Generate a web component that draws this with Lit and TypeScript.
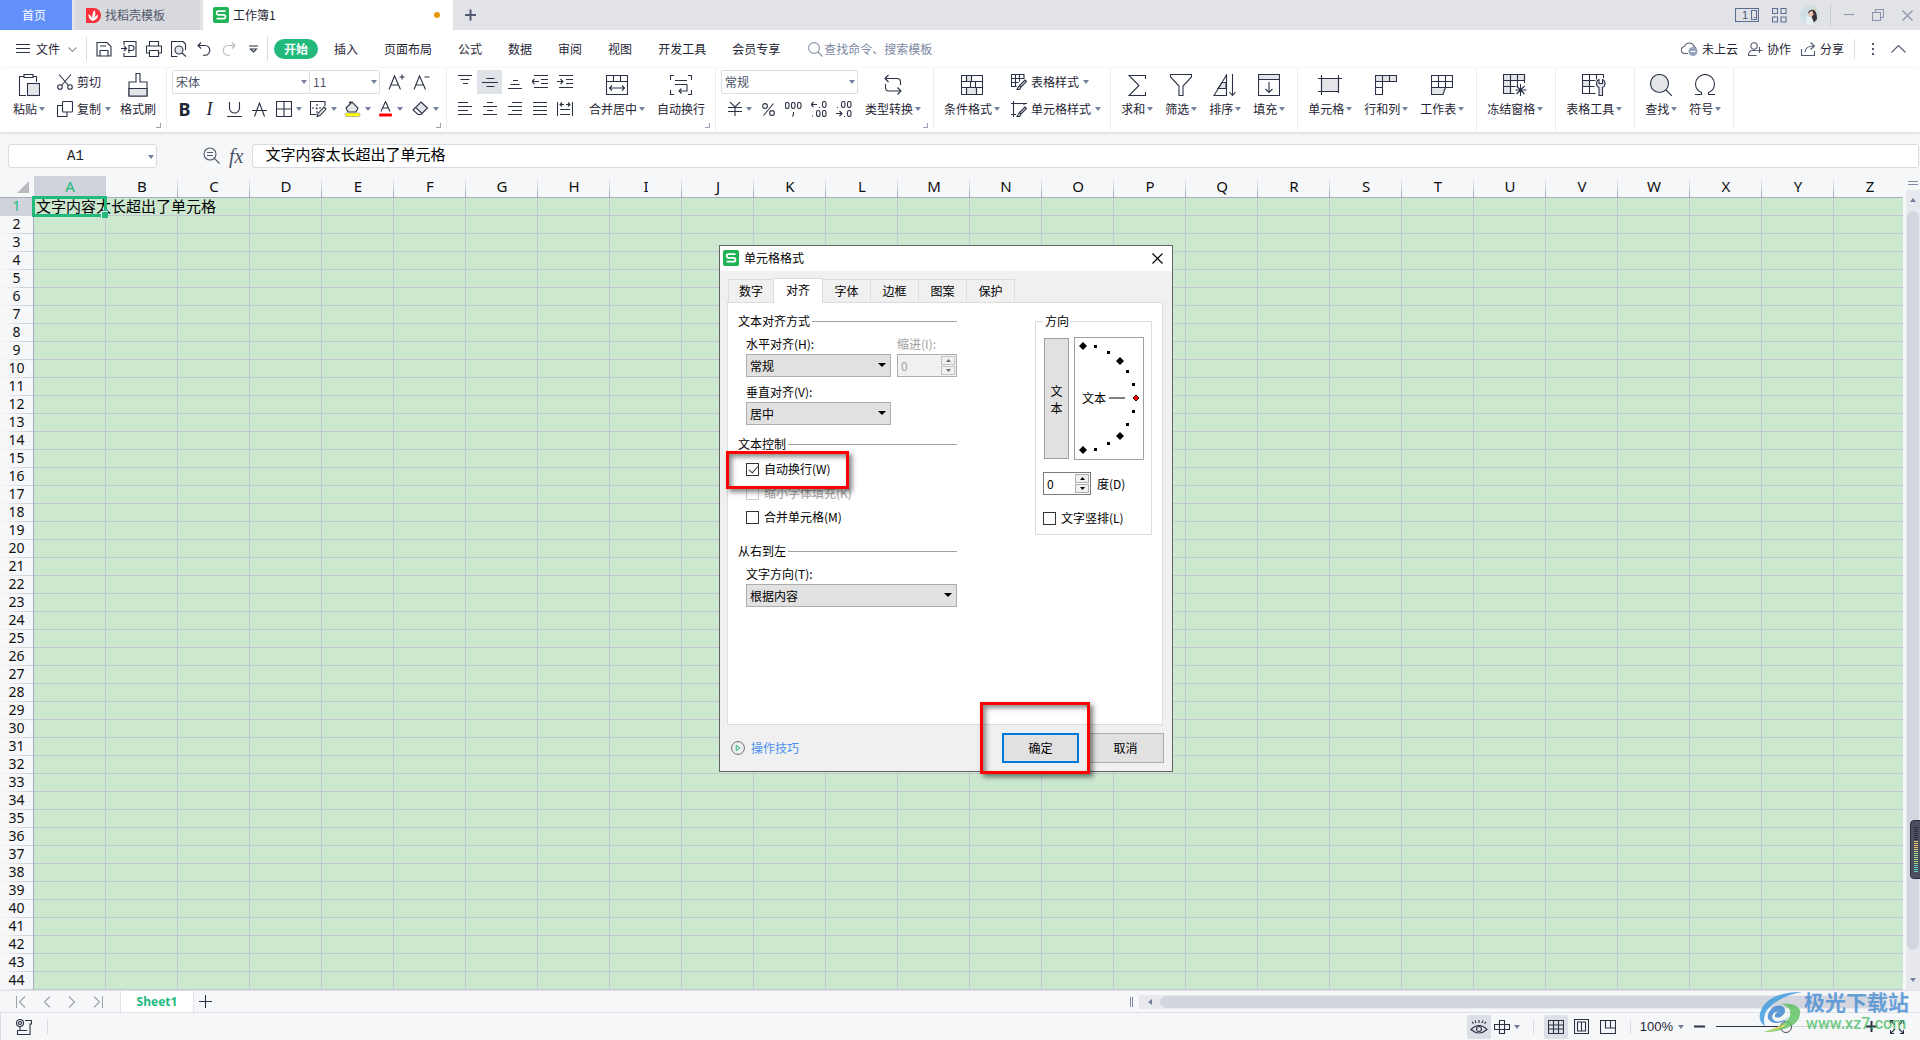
import { LitElement, html, svg, css, TemplateResult, SVGTemplateResult } from "lit";
import { customElement, state } from "lit/decorators.js";

const icon = (w: number, h: number, body: SVGTemplateResult) =>
  html`<svg class="ic" width=${w} height=${h} viewBox="0 0 ${w} ${h}" aria-hidden="true">${body}</svg>`;

const caret = html`<svg class="caret" width="6" height="4" viewBox="0 0 6 4" aria-hidden="true"><path d="M0 0h6L3 4z" /></svg>`;

const logo = html`<svg width="16" height="16" viewBox="0 0 16 16" aria-hidden="true">
  <rect width="16" height="16" rx="2" fill="#1fb355" />
  <path d="M12.5 4.2H5.2Q3.7 4.2 3.7 6T5.2 7.9h5.6q1.6 0 1.6 1.9t-1.6 1.9H3.6" fill="none" stroke="#fff" stroke-width="1.8" />
</svg>`;

const ICONS: Record<string, TemplateResult> = {
  menu: icon(14, 10, svg`<path d="M0 .5h14M0 4.5h14M0 8.5h14" />`),
  chevron: icon(9, 5, svg`<path class="soft" d="M.5 .5l4 4 4-4" />`),
  save: icon(16, 16, svg`<path d="M1 1.5h10l4 4V15H1zM4 15V9.5h8V15M4 5h6" />`),
  exportPdf: icon(16, 16, svg`<path d="M3 4V.5h12v15H3V12M0 7.5h5M3 5l2.500 2.500L3 10M8 12V4.500h2.500a2.500 2.500 0 0 1 0 5H7" />`),
  print: icon(16, 16, svg`<path d="M3.500 5V.5h9V5M3.500 12H.5V5h15v7h-3M3.500 9.500h9v6h-9z" />`),
  preview: icon(16, 16, svg`<path d="M14.500 9V3L12 .5H.5v15h6" /><circle cx="8" cy="9" r="4" class="tint" /><path d="M11 12l4 3.500" />`),
  undo: icon(14, 14, svg`<path d="M4 .5L1 3.500 4 6.500M1 3.500h7a4.800 4.800 0 0 1 0 9.700H6" />`),
  redo: icon(14, 14, svg`<path class="pale" d="M10 .5l3 3-3 3M13 3.500H6a4.800 4.800 0 0 0 0 9.700h2" />`),
  more: icon(9, 8, svg`<path d="M0 1h9M1.500 4L4.500 7l3-3z" />`),
  search: icon(15, 15, svg`<circle class="cool" cx="6" cy="6" r="5.400" /><path class="cool" d="M10 10l4.500 4.500" />`),

  paste: icon(22, 24, svg`<path d="M6 3.500H1.500v19H8M15 3.500h3.500V9M6 1.500h9v3H6z" /><rect class="tint" x="9.500" y="10.500" width="12" height="12" />`),
  cut: icon(16, 16, svg`<path d="M2 .5l9.500 11M14 .5L4.500 11.500" /><circle cx="3" cy="13" r="2.300" /><circle cx="13" cy="13" r="2.300" />`),
  copy: icon(16, 16, svg`<rect x="5.500" y=".5" width="10" height="10.500" rx="1" /><path d="M5 4.500H.5v11h9.500V11" />`),
  painter: icon(20, 24, svg`<path d="M8 .5h4V9h7v14H1V9h7z" /><path class="tint" d="M1 15.500h18V23H1z" />`),

  fontUp: icon(17, 16, svg`<path d="M1 15.500L6.500 2l6 13.500M3 11h7.500M11.500 3h5M14 .5v5" />`),
  fontDown: icon(17, 16, svg`<path d="M1 15.500L6.500 2l6 13.500M3 11h7.500M11.500 3h5" />`),
  underline: icon(15, 15, svg`<path d="M2.500 0v6a5 5 0 0 0 10 0V0M0 14.500h15" />`),
  strike: icon(15, 15, svg`<path d="M2.500 14.500L7.500 1l5 13.500M0 8.500h15" />`),
  borders: icon(16, 16, svg`<path d="M.5 .5h15v15H.5zM8 .5v15M.5 8h15" />`),
  pattern: icon(17, 16, svg`<path d="M15 5V.5H.5v13h6" /><path stroke-dasharray="2 1.500" d="M7 3v9M2 7h9" /><path class="tint" d="M14 6l2 2-6 6.500-3 1 1-3z" />`),
  fill: icon(17, 16, svg`<path class="tint" d="M2 7l6-6 6 6-2 4H4zM5 2l2-1.500" /><rect x="1" y="12" width="15" height="3.500" rx="1.500" fill="#ffff00" stroke="#8a8f9c" stroke-width=".6" />`),
  fontColor: icon(15, 16, svg`<path d="M3 10.500L7.500 .5l4.500 10M4.500 7h6" /><rect class="plain" x="1" y="12.500" width="13" height="3" rx="1" fill="#ff0000" />`),
  eraser: icon(17, 16, svg`<path class="tint" d="M9 1l6.500 6-5.500 5.500-6.500-6z" /><path d="M3.500 6.500L1 9l5 4.500h3l1-1" />`),

  top: icon(14, 14, svg`<path d="M0 .5h14M2.500 4.500h9M5 8.500h5" />`),
  middle: icon(16, 14, svg`<path d="M4.500 3.500h8M0 7.500h16M4.500 11.500h8" />`),
  bottom: icon(14, 14, svg`<path d="M5 5.500h5M2.500 9.500h9M0 13.500h14" />`),
  outdent: icon(16, 14, svg`<path d="M2 .5h14M9 4.500h7M9 8.500h7M2 12.500h14M0 6.500h7M2.500 4L0 6.500 2.500 9" />`),
  indent: icon(16, 14, svg`<path d="M2 .5h14M9 4.500h7M9 8.500h7M2 12.500h14M0 6.500h6M3.500 4L6 6.500 3.500 9" />`),
  left: icon(14, 14, svg`<path d="M0 .5h10M0 4.500h14M0 8.500h10M0 12.500h14" />`),
  center: icon(14, 14, svg`<path d="M4 .5h6M0 4.500h14M4 8.500h6M0 12.500h14" />`),
  right: icon(14, 14, svg`<path d="M4 .5h10M0 4.500h14M4 8.500h10M0 12.500h14" />`),
  justify: icon(14, 14, svg`<path d="M0 .5h14M0 4.500h14M0 8.500h14M0 12.500h14" />`),
  distribute: icon(16, 14, svg`<path d="M.5 0v14M15.500 0v14M3 7.500h10M3 12.500h10M3 2.500h4M9 2.500h4M5 .5l-2 2 2 2M11 .5l2 2-2 2" />`),
  merge: icon(22, 20, svg`<path d="M.5 .5h21v19H.5zM.5 6.500h21M7.500 .5v6M14.500 .5v6M3.500 13h15M6 10.500L3.500 13 6 15.500M16 10.500l2.500 2.500-2.500 2.500" />`),
  wrap: icon(22, 20, svg`<path d="M4 .5H.5V5M18 .5h3.500V5M.5 15v4.500H4M21.500 15v4.500H18M5 5.500h12M5 9.500h12M17 9.500V16H9M11.500 13.500L9 16l2.500 2.500" />`),

  yen: icon(14, 14, svg`<path d="M2 0l5 5 5-5M0 5.500h14M0 9.500h14M7 5v9" />`),
  percent: icon(13, 13, svg`<circle cx="3" cy="3" r="2.400" /><circle cx="10" cy="10" r="2.400" /><path d="M11.500 .5L1.500 12.500" />`),
  thousands: icon(17, 15, svg`<rect x=".5" y=".5" width="3.500" height="6" rx="1.700" /><rect x="6.500" y=".5" width="3.500" height="6" rx="1.700" /><rect x="12.500" y=".5" width="3.500" height="6" rx="1.700" /><path d="M8.500 10v2l-1 2.500" />`),
  decLess: icon(16, 16, svg`<path d="M0 3.500h6M2.500 1L0 3.500 2.500 6M8.500 6v1M1.500 14.500v1" /><rect x="11.500" y=".5" width="3.500" height="6" rx="1.700" /><rect x="5.500" y="9.500" width="3.500" height="6" rx="1.700" /><rect x="11.500" y="9.500" width="3.500" height="6" rx="1.700" />`),
  decMore: icon(16, 16, svg`<path d="M0 12.500h6M3.500 10L6 12.500 3.500 15M1.500 6v1M8.500 15v1" /><rect x="5.500" y=".5" width="3.500" height="6" rx="1.700" /><rect x="11.500" y=".5" width="3.500" height="6" rx="1.700" /><rect x="11.500" y="9.500" width="3.500" height="6" rx="1.700" />`),
  convert: icon(18, 22, svg`<path d="M4.500 1L1 4.500 4.500 8M1 4.500h12q3.500 0 3.500 3.500V11M1.500 10v3.500Q1.500 17 5 17h12M13.500 13.500L17 17l-3.500 3.500" />`),

  conditional: icon(22, 20, svg`<path class="tint" d="M5.500 .5h5v6h-5zM5.500 12.500h10v7h-10z" /><path d="M.5 .5h21v19H.5zM.5 6.500h21M.5 12.500h21M5.500 .5v6M10.500 .5v6M9.500 6.500v6M14.500 6.500v6M5.500 12.500v7M15.500 12.500v7" />`),
  tableStyle: icon(16, 16, svg`<path d="M13 5V.5H.5v12h5M.5 4.500H13M.5 8.500h7M4.500 .5v12M8.500 .5v7" /><path class="tint" d="M14 6l1.500 1.500L10 13l-1.500-1.500zM8.500 11.500L10 13l-1.500 2.500H6z" />`),
  cellStyle: icon(16, 16, svg`<path d="M0 2.500h16M2.500 0v16M13 2.500V4M0 13.500h5" /><path class="tint" d="M14 6l1.500 1.500L10 13l-1.500-1.500zM8.500 11.500L10 13l-1.500 2.500H6z" />`),
  sum: icon(18, 21, svg`<path d="M17.500 4V.5H1l10 10-10 10h16.500V17" />`),
  filter: icon(22, 22, svg`<path d="M.5 .5h21V3L13 12v9.500H9V12L.5 3z" />`),
  sort: icon(24, 22, svg`<path class="tint" d="M5 14.500h8V8.500H9z" /><path d="M1 21.500L13.500 1v20.500zM5 14.500h8.500M9 8.500h4.500M19.500 0v21.500M16.500 18l3 3.500 3-3.500" />`),
  fillDown: icon(22, 22, svg`<path class="tint" d="M.5 .5h21v5H.5z" /><path d="M.5 .5h21v21H.5zM11 8v10M7.500 15l3.500 3.500 3.500-3.500" />`),
  cell: icon(24, 20, svg`<path class="tint" d="M3.500 3.500h17v13h-17z" /><path d="M0 3.500h24M3.500 0v20M20.500 0v12M0 16.500h17M20.500 15v3" />`),
  rowCol: icon(22, 20, svg`<path class="tint" d="M.5 .5h7v6h-7zM7.500 .5h14v6h-14z" /><path d="M.5 6.500h7v13h-7zM.5 12.500h7M14.500 .5v6" />`),
  sheet: icon(22, 20, svg`<path class="tint" d="M.5 12.500h14l-2.500 7H.5z" /><path d="M.5 .5h21v12H.5zM.5 6.500h21M7.500 .5v12M14.500 .5v12" />`),
  freeze: icon(24, 22, svg`<path class="tint" d="M.5 .5h21v6h-14v13h-7z" /><path d="M7.500 .5v19M14.500 .5v12M.5 6.500h21M.5 12.500h12M21.500 .5V9M.5 19.500h11M17.500 10v12M12.500 16h11M13.500 12l8 8M21.500 12l-8 8" />`),
  tableTool: icon(24, 22, svg`<path class="tint" d="M.5 6.500h7v6h-7z" /><path d="M21.500 4V.5H.5v19h13M.5 6.500h13M.5 12.500h12M7.500 .5v19M14.500 .5v5" /><path class="tint" d="M17 21.500v-8q-2.500-1-2.500-4t2.500-4v4h3.500v-4q2.500 1 2.500 4t-2.500 4v8z" />`),
  find: icon(22, 22, svg`<circle class="tint" cx="9.500" cy="9.500" r="9" /><path d="M16 16l6 6" />`),
  omega: icon(22, 22, svg`<path d="M1 20.500h6.500v-2A9.500 9.500 0 0 1 1.500 10a9.500 9.500 0 0 1 19 0 9.500 9.500 0 0 1-6 8.500v2H21" />`),

  cloud: icon(17, 16, svg`<path class="mid" d="M7 12.500H4a3.500 3.500 0 0 1-.5-7 5 5 0 0 1 9.500 0q1 .5 2 2" /><circle class="plain" cx="12" cy="10.500" r="4.500" fill="#97a2bb" /><path d="M9.500 10.500h5" class="white" />`),
  people: icon(15, 15, svg`<circle class="mid" cx="6" cy="4" r="3.200" /><path class="mid" d="M8.500 13.500H.5Q.5 8.500 5 8.500h3M11.500 5v6M8.500 8.500h6" />`),
  share: icon(15, 15, svg`<path class="mid" d="M.5 7v6.500h13V9M4 10q.5-6 8.500-6M9.500 .5l4 3.500-4 3.500" />`),

  zoomOut: icon(17, 17, svg`<circle class="mid" cx="7" cy="7" r="6" /><path class="mid" d="M11.500 11.500l5 5M4 5.500h6M4 8.500h6" />`),

  eye: icon(18, 16, svg`<path d="M1 10.500q8-8 16 0-8 7-16 0zM2 3l1.500 1.500M9 1v3M16 3l-1.500 1.500M5 1.500L6 4M13 1.500L12 4" /><circle cx="9" cy="10" r="2.500" />`),
  cross: icon(16, 14, svg`<path d="M5.500 .5h5v4h5v5h-5v4h-5v-4H.5v-5h5zM5.500 4.500h5v5h-5z" />`),
  normalView: icon(16, 14, svg`<path d="M.5 .5h15v13H.5zM.5 5h15M.5 9h15M5.500 .5v13M10.500 .5v13" />`),
  pageView: icon(15, 15, svg`<path d="M.5 .5h14v14H.5zM3.500 3v9h8V3zM7.500 3v9" />`),
  breakView: icon(16, 14, svg`<path d="M.5 .5h15v13H.5zM5.500 .5V8h10M10.500 .5V8" />`),
  full: icon(14, 14, svg`<path d="M.5 4V.5H4M10 .5h3.500V4M13.500 10v3.500H10M4 13.500H.5V10M.5 .5L5 5M13.500 .5L9 5M13.500 13.500L9 9M.5 13.500L5 9" />`),
  macro: icon(16, 16, svg`<circle class="tint" cx="4" cy="4" r="3.500" /><circle cx="4" cy="4" r="1.500" /><path d="M9 1.500h6.500V5H14v10.500H1.500v-4H11M4 11V8" />`),
};

const MENUS = ["插入", "页面布局", "公式", "数据", "审阅", "视图", "开发工具", "会员专享"];
const QUICK = ["save", "exportPdf", "print", "preview", "undo", "redo", "more"];
const COLS = "ABCDEFGHIJKLMNOPQRSTUVWXYZ".split("");
const ROWS = Array.from({ length: 44 }, (_, i) => i + 1);
const CONTENT = "文字内容太长超出了单元格";
const DIALOG_TABS = ["数字", "对齐", "字体", "边框", "图案", "保护"];

const DIAL: [number, number, boolean][] = [
  [8, 8, true], [21, 9, false], [34, 15, false], [45, 23, true], [53, 34, false], [59, 47, false],
  [59, 74, false], [53, 87, false], [45, 98, true], [34, 106, false], [21, 112, false], [8, 112, true],
];

const FONT = css`"Noto Sans CJK SC", "Noto Sans", sans-serif`;

@customElement("format-dialog")
export class FormatDialog extends LitElement {
  @state() private tab = "对齐";

  static styles = css`
    :host { display: flex; flex-direction: column; box-sizing: border-box; border: 1px solid #5f6361; background: #f0f0f0; color: #000; font: 12px/16px ${FONT}; }
    * { box-sizing: border-box; }
    button, input, select { font: inherit; color: inherit; margin: 0; padding: 0; border-radius: 0; }
    header { display: flex; align-items: center; gap: 5px; height: 25px; padding: 0 9px 1px 3px; background: #fff; }
    h2 { flex: 1; margin: 0; font: inherit; }
    .close { display: flex; border: 0; background: none; }
    .close path { fill: none; stroke: #000; stroke-width: 1.2; }
    .tabs { display: flex; align-items: flex-end; height: 31px; padding-left: 8px; }
    .tab { width: 48px; height: 23px; border: 1px solid #dcdcdc; border-left: 0; border-bottom: 0; background: #f0f0f0; }
    .tab:first-child { width: 46px; border-left: 1px solid #dcdcdc; }
    .tab.on { position: relative; width: 49px; height: 25px; margin-bottom: -1px; padding-bottom: 2px; background: #fff; }
    .panel { flex: 1; display: flex; justify-content: space-between; align-items: flex-start; margin: 0 9px 0 7px; padding: 10px; border: 1px solid #dcdcdc; background: #fff; }
    .left { width: 219px; display: flex; flex-direction: column; }
    h3 { display: flex; align-items: center; gap: 2px; margin: 0 0 7px; font: inherit; }
    h3::after { content: ""; flex: 1; height: 1px; background: #a0a0a0; }
    .block { display: flex; flex-direction: column; margin-bottom: 11px; padding-left: 8px; }
    .block.checks { gap: 8px; padding-top: 2px; margin-bottom: 18px; }
    .pair { display: flex; justify-content: space-between; margin-bottom: 7px; }
    .field { display: flex; flex-direction: column; gap: 2px; }
    .pick { position: relative; display: flex; width: 145px; height: 23px; }
    .pick.wide { width: 211px; }
    .pick::after { content: ""; position: absolute; right: 5px; top: 9px; border: 4px solid transparent; border-top-color: #000; border-bottom: 0; pointer-events: none; }
    select { appearance: none; width: 100%; padding-left: 3px; border: 1px solid #adadad; background: #e1e1e1; }
    .spin { display: flex; align-items: center; width: 60px; height: 23px; padding-right: 1px; border: 1px solid #adadad; background: #f0f0f0; }
    .spin.live { width: 48px; background: #fff; border-color: #7a7a7a; }
    .spin input { flex: 1; min-width: 0; padding-left: 3px; border: 0; background: none; outline: 0; }
    .steps { display: flex; flex-direction: column; width: 14px; }
    .steps button { display: flex; align-items: center; justify-content: center; height: 9px; border: 1px solid #c4c4c4; background: #f0f0f0; }
    .live .steps button { border-color: #adadad; }
    .steps button + button { margin-top: 1px; }
    .dim, .dim input { color: #a0a0a0; }
    .steps path { fill: #000; }
    .dim .steps path { fill: #6d6d6d; }
    .check { display: flex; align-items: center; gap: 5px; height: 16px; }
    .check input { appearance: none; display: flex; width: 13px; height: 13px; border: 1px solid #333; background: #fff; }
    .check.dim input { border-color: #ccc; }
    .check input:checked::after { content: ""; width: 4px; height: 8px; margin: 0 0 0 4px; border: solid #333; border-width: 0 1px 1px 0; rotate: 42deg; }
    fieldset { display: flex; flex-direction: column; width: 117px; margin: 0; padding: 8px 7px; border: 1px solid #dcdcdc; }
    legend { padding: 0 2px; }
    .dial { display: flex; align-items: center; justify-content: space-between; padding-left: 1px; margin-bottom: 12px; }
    .vert { width: 25px; height: 121px; padding: 0 5px; border: 1px solid #a0a0a0; background: #e1e1e1; line-height: 17px; }
    .ring { width: 70px; height: 123px; border: 1px solid #a0a0a0; }
    .ring text { font: 12px ${FONT}; }
    .deg { display: flex; align-items: center; gap: 6px; margin-bottom: 15px; }
    footer { display: flex; align-items: center; gap: 8px; height: 46px; padding: 0 8px 0 11px; }
    footer a { flex: 1; display: flex; align-items: center; gap: 6px; color: #4a90f0; text-decoration: none; }
    .btn { width: 77px; height: 30px; border: 1px solid #adadad; background: #e1e1e1; }
    .btn.main { border: 2px solid #0078d7; }
    .mark { position: absolute; border: 3px solid #fe0000; box-shadow: 3px 3px 5px rgba(0, 0, 0, .5), inset 3px 3px 5px rgba(0, 0, 0, .45); pointer-events: none; }
    .mark.wrap { left: 6px; top: 205px; width: 123px; height: 38px; }
    .mark.ok { left: 260px; top: 456px; width: 110px; height: 72px; }
  `;

  private steps(off = false) {
    return html`<span class="steps">
      <button aria-label="增加" ?disabled=${off}><svg width="5" height="3"><path d="M0 3h5L2.500 0z" /></svg></button>
      <button aria-label="减少" ?disabled=${off}><svg width="5" height="3"><path d="M0 0h5L2.500 3z" /></svg></button>
    </span>`;
  }

  render() {
    return html`
      <header>${logo}<h2>单元格格式</h2>
        <button class="close" aria-label="关闭"><svg width="11" height="11"><path d="M.5 .5l10 10M10.500 .5l-10 10" /></svg></button>
      </header>
      <div class="tabs" role="tablist">
        ${DIALOG_TABS.map((t) => html`<button role="tab" class="tab ${t === this.tab ? "on" : ""}" @click=${() => (this.tab = t)}>${t}</button>`)}
      </div>
      <div class="panel">
        <div class="left">
          <h3>文本对齐方式</h3>
          <div class="block">
            <div class="pair">
              <div class="field"><label for="h">水平对齐(H):</label><span class="pick"><select id="h"><option>常规</option></select></span></div>
              <div class="field dim"><label for="in">缩进(I):</label><span class="spin"><input id="in" value="0" disabled />${this.steps(true)}</span></div>
            </div>
            <div class="field"><label for="v">垂直对齐(V):</label><span class="pick"><select id="v"><option>居中</option></select></span></div>
          </div>
          <h3>文本控制</h3>
          <div class="block checks">
            <label class="check"><input type="checkbox" checked />自动换行(W)</label>
            <label class="check dim"><input type="checkbox" disabled />缩小字体填充(K)</label>
            <label class="check"><input type="checkbox" />合并单元格(M)</label>
          </div>
          <h3>从右到左</h3>
          <div class="block">
            <div class="field"><label for="t">文字方向(T):</label><span class="pick wide"><select id="t"><option>根据内容</option></select></span></div>
          </div>
        </div>
        <fieldset>
          <legend>方向</legend>
          <div class="dial">
            <button class="vert">文本</button>
            <svg class="ring" viewBox="0 0 68 121">
              <text x="7" y="65">文本</text>
              <path d="M34 60h16" stroke="#808080" stroke-width="2" />
              ${DIAL.map(([x, y, big]) => big
                ? svg`<path d="M${x} ${y - 4}l4 4-4 4-4-4z" />`
                : svg`<rect x=${x - 2} y=${y - 2} width="3" height="3" />`)}
              <path d="M61 57l3 3-3 3-3-3z" fill="#fe0000" stroke="#400" />
            </svg>
          </div>
          <div class="deg"><span class="spin live"><input id="deg" value="0" />${this.steps()}</span><label for="deg">度(D)</label></div>
          <label class="check"><input type="checkbox" />文字竖排(L)</label>
        </fieldset>
      </div>
      <footer>
        <a href="#tips"><svg width="14" height="14" viewBox="0 0 14 14" fill="none"><circle cx="7" cy="7" r="6.400" stroke="#666e7a" /><path d="M5.200 4.200v5.600L9 7z" stroke="#23b877" /></svg>操作技巧</a>
        <button class="btn main">确定</button><button class="btn">取消</button>
      </footer>
      <span class="mark wrap"></span><span class="mark ok"></span>`;
  }
}

@customElement("app-root")
export class AppRoot extends LitElement {
  static styles = css`
    :host { position: relative; display: flex; flex-direction: column; height: 100vh; overflow: hidden; background: #f6f7f9; color: #1f2535; font: 12px/16px ${FONT}; }
    * { box-sizing: border-box; }
    button, input, select { font: inherit; color: inherit; margin: 0; padding: 0; border: 0; background: none; }
    button { display: flex; align-items: center; white-space: nowrap; }
    svg { flex: none; }
    .ic { fill: none; stroke: #2b3245; stroke-width: 1.1; }
    .ic .soft { stroke: #8f95a3; }
    .ic .pale { stroke: #b4b8c1; }
    .ic .cool { stroke: #8a93ab; }
    .ic .mid { stroke: #515a70; }
    .ic .white { stroke: #fff; }
    .ic .tint { fill: #e3e5e9; }
    .ic .plain { stroke: none; }
    .caret { fill: #74809e; }
    .sep { width: 1px; align-self: stretch; background: #d9dbe1; }
    .grow { flex: 1; }

    .title { display: flex; height: 30px; background: #e2e3e7; }
    .tab { gap: 4px; height: 30px; }
    .home { justify-content: center; width: 72px; padding-right: 4px; background: #6190fb; color: #fff; }
    .tpl { width: 131px; padding-left: 11px; border: solid #e2e3e7; border-width: 0 3px; background: #d8d9dc; color: #50586c; }
    .book { width: 250px; padding: 0 13px 0 10px; background: #fff; }
    .dot { width: 6px; height: 6px; margin-left: auto; border-radius: 50%; background: #e59a06; }
    .add { padding: 0 12px; }
    .win { display: flex; align-items: center; gap: 13px; padding-right: 5px; }
    .win .sep { margin: 4px -3px; background: #c9cbd2; }
    .win .ic { stroke: #5c6d92; }
    .win .ctl { width: 16px; justify-content: center; }
    .count { font: 11px "Liberation Sans", sans-serif; fill: #47536f; stroke: none; }

    .menu { display: flex; align-items: center; height: 38px; padding: 0 14px 0 16px; background: #fff; }
    .file { gap: 6px; margin-right: 9px; }
    .file .ic:last-child { margin-left: 2px; }
    .menu .sep { margin: 7px 0; }
    .quick { display: flex; align-items: center; padding-left: 4px; padding-right: 1px; }
    .quick button { justify-content: center; width: 25px; height: 24px; }
    .nav { display: flex; align-items: center; gap: 26px; margin-left: 6px; }
    .nav .on { height: 20px; margin-right: -10px; padding: 0 10px; border-radius: 10px; background: #21ba7c; color: #fff; font-weight: 700; }
    .find { display: flex; align-items: center; gap: 1px; margin-left: 28px; }
    .find input { width: 130px; outline: 0; }
    .find input::placeholder { color: #7d87a3; opacity: 1; }
    .acct { display: flex; align-items: center; gap: 10px; }
    .acct button { gap: 4px; }
    .acct .sep { height: 20px; margin: 0; align-self: center; }

    .ribbon { position: relative; display: flex; height: 64px; padding-bottom: 2px; background: #fff; box-shadow: 0 1px 3px rgba(40, 45, 60, .16); }
    .group { position: relative; display: flex; gap: 12px; padding: 0 12px 0 10px; border-right: 1px solid #ececf0; }
    .clip { padding: 0 10px 0 13px; }
    .clip .col { margin-right: -3px; }
    .font { width: 280px; padding: 0 0 0 5px; }
    .align { padding: 0 10px 0 5px; }
    .number { gap: 7px; padding: 0 12px 0 5px; }
    .style { padding-right: 9px; gap: 11px; }
    .launch { position: absolute; right: 5px; bottom: 2px; width: 5px; height: 5px; border: solid #99a1b5; border-width: 0 1px 1px 0; }
    .big { flex-direction: column; padding-top: 5px; gap: 4px; }
    .big .box { display: flex; align-items: center; justify-content: center; height: 24px; }
    .big .lab, .row { display: flex; align-items: center; }
    .lab { gap: 2px; }
    .col { display: flex; flex-direction: column; padding-top: 2px; gap: 3px; }
    .row { height: 24px; }
    .small { gap: 4px; height: 24px; }
    .cellb { justify-content: center; width: 25px; height: 24px; }
    .cellb.on { background: #dfe3e8; }
    .drops { display: flex; margin-left: 4px; }
    .drop { width: 34px; height: 24px; gap: 4px; }
    .yen { width: 35px; padding-left: 7px; }
    .pick { position: relative; display: flex; height: 24px; }
    .pick .caret { position: absolute; right: 3px; top: 10px; pointer-events: none; }
    .pick select { appearance: none; width: 100%; padding-left: 3px; border: 1px solid #dcdee4; border-radius: 2px; color: #4a5266; }
    .w-face { width: 138px; }
    .w-size { width: 71px; margin: 0 4px 0 -1px; }
    .w-format { width: 137px; }
    .b { font: 700 18px/20px "Noto Sans", sans-serif; }
    .i { font: italic 18px/20px "Liberation Serif", serif; }

    .bar { display: flex; align-items: center; height: 44px; padding: 3px 1px 0 8px; }
    .name { position: relative; display: flex; width: 149px; height: 24px; border: 1px solid #dadbe1; border-radius: 3px; background: #fff; }
    .name input { width: 100%; padding-right: 14px; text-align: center; outline: 0; font: 14px "Liberation Mono", monospace; color: #222; }
    .name .caret { position: absolute; right: 2px; top: 10px; }
    .tools { display: flex; align-items: center; gap: 9px; margin: 0 9px 0 46px; }
    .fx { font: italic 20px/22px "Liberation Serif", serif; color: #4a5266; }
    .formula { flex: 1; height: 24px; padding: 0 12px 4px; border: 1px solid #dadbe1; border-radius: 3px; background: #fff; outline: 0; font-size: 15px; color: #000; }

    .work { flex: 1; display: flex; min-height: 0; }
    .sheet { flex: 1; min-width: 0; overflow: hidden; background: #cce8cf; }
    table { width: 1906px; table-layout: fixed; border-collapse: separate; border-spacing: 0; }
    th, td { padding: 0; font-weight: 400; }
    th { font: 14px/16px "Noto Sans", sans-serif; color: #111; background: #f6f7f9; vertical-align: top; }
    thead th { height: 22px; font-size: 15px; line-height: 21px; border-bottom: 1px solid #a9acbf; background: linear-gradient(#f6f7f9, #a9acbf) right / 1px 100% no-repeat #f6f7f9; }
    thead th.on { background: #d0d3dc; color: #21ba7c; }
    thead th.corner { width: 34px; background: #f6f7f9; }
    .corner svg { display: block; margin: 5px 0 0 17px; }
    tbody th { height: 18px; border-right: 1px solid #a9acbf; background: linear-gradient(90deg, #f6f7f9, #c5c8d4) bottom / 100% 1px no-repeat #f6f7f9; }
    tbody th.on { background: #d0d3dc; color: #21ba7c; }
    td { height: 18px; border: solid #c1c7d3; border-width: 0 1px 1px 0; }
    td.act { position: relative; border-right-color: transparent; }
    td.under { border-right-color: transparent; }
    .txt { display: block; width: 0; height: 17px; padding-left: 2px; white-space: nowrap; font-size: 15px; line-height: 16px; color: #000; }
    .cursor { position: absolute; inset: -2px; border: 3px solid #21ba7c; pointer-events: none; }
    .cursor::after { content: ""; position: absolute; right: -4px; bottom: -4px; width: 6px; height: 6px; border: 1px solid #e9f5ea; border-width: 1px 0 0 1px; background: #21ba7c; }

    .vbar { display: flex; flex-direction: column; align-items: center; width: 17px; padding-left: 3px; }
    .split { width: 10px; height: 4px; margin: 5px 0; border: solid #7f8ba8; border-width: 1px 0; }
    .vtrack { flex: 1; display: flex; flex-direction: column; align-items: center; align-self: stretch; padding: 8px 0; gap: 9px; background: #e8e9ee; }
    .vthumb { flex: 1; width: 12px; margin-bottom: 19px; border-radius: 6px; background: #d4d6df; }
    .up { display: flex; rotate: 180deg; }

    .sheets { display: flex; align-items: center; height: 23px; padding-right: 17px; border: solid #e1e2e9; border-width: 1px 0; }
    .arrows { display: flex; gap: 17px; padding: 0 17px 0 16px; }
    .arrows .ic { stroke: #9da1aa; }
    .sheettab { justify-content: center; width: 74px; height: 21px; border: solid #e1e2e9; border-width: 0 1px; background: #fff; color: #21ba7c; font: 700 12px/16px "Noto Sans", sans-serif; }
    .addsheet { margin-left: 5px; }
    .hgrip { width: 3px; height: 10px; margin-right: 6px; border: solid #7f8ba8; border-width: 0 1px; }
    .htrack { flex: 0 1 764px; display: flex; align-items: center; gap: 7px; height: 14px; padding: 0 18px 0 8px; background: #e8e9ee; }
    .hthumb { flex: 1; height: 12px; border-radius: 6px; background: #d4d6df; }
    .lt { display: flex; rotate: 90deg; }

    .status { display: flex; align-items: center; height: 27px; padding-right: 16px; border-left: 1px solid #d9dbe1; }
    .status .sep { height: 14px; align-self: center; }
    .rec { margin: 0 15px; }
    .sbtn { justify-content: center; width: 24px; height: 24px; border-radius: 2px; }
    .sbtn.on { background: #dce0e6; }
    .status .lead { gap: 4px; margin: 0 13px 0 3px; }
    .views { display: flex; gap: 2px; margin: 0 10px; }
    .zoom { gap: 5px; margin: 0 10px 0 9px; font: 13px/16px "Liberation Sans", sans-serif; }
    .slider { appearance: none; width: 140px; height: 14px; margin: 0 10px 0 11px; background: linear-gradient(#2b3245 0 0) left / 70px 1px no-repeat, linear-gradient(#cfd2da 0 0) center / 100% 1px no-repeat; }
    .slider::-webkit-slider-thumb { appearance: none; width: 12px; height: 12px; border: 1px solid #444b5c; border-radius: 50%; background: #f6f7f9; }
    .status .fs { margin-left: 13px; }

    format-dialog { position: absolute; left: calc(50% - 241px); top: 245px; width: 454px; height: 527px; }
    .gauge { position: absolute; right: 0; top: 820px; }
    .brand { position: absolute; right: 11px; bottom: 7px; display: flex; align-items: center; gap: 1px; opacity: .82; pointer-events: none; }
    .brand div { display: flex; flex-direction: column; gap: 3px; }
    .brand strong { font-size: 21px; line-height: 22px; color: #4b8fd3; }
    .brand em { padding-left: 2px; font: 500 16px/18px Roboto, sans-serif; color: #55c06a; }
  `;

  private big(name: string, label: string, drop = true) {
    return html`<button class="big"><span class="box">${ICONS[name]}</span><span class="lab">${label}${drop ? caret : ""}</span></button>`;
  }
  private cell(name: string, on = false) {
    return html`<button class="cellb ${on ? "on" : ""}" aria-label=${name}>${ICONS[name]}</button>`;
  }
  private drop(name: string) {
    return html`<button class="drop" aria-label=${name}>${ICONS[name]}${caret}</button>`;
  }

  private titleBar() {
    return html`<div class="title">
      <button class="tab home">首页</button>
      <button class="tab tpl"><svg width="15" height="15" viewBox="0 0 15 15"><path d="M0 0h8a7 7.500 0 0 1 0 15H0z" fill="#f8303c" /><path d="M6.500 13Q2 11 2.500 6q3 1.500 4 5-1-5 2-9 2 4-.5 8 1-2 4-3.500 0 5-5.500 6.500z" fill="#fff" /></svg>找稻壳模板</button>
      <button class="tab book">${logo}工作簿1<i class="dot"></i></button>
      <button class="add" aria-label="新建">${icon(11, 12, svg`<path class="mid" stroke-width="2" d="M0 6h11M5.500 .5v11" />`)}</button>
      <span class="grow"></span>
      <div class="win">
        <svg class="ic" width="24" height="14" viewBox="0 0 24 14"><path d="M.5 .5h23v13H.5zM16.500 2.500h5v9h-5zM18.500 9.500h2" /><text class="count" x="7" y="11">1</text></svg>
        <svg class="ic" width="15" height="15" viewBox="0 0 15 15"><path d="M.5 .5h5v5h-5zM9 .5h5v5H9zM.5 9h5v5h-5zM9 9h5v5H9z" /></svg>
        <svg width="20" height="20" viewBox="0 0 20 20"><circle cx="10" cy="10" r="10" fill="#cfdfe3" /><path d="M8 8q1.500-4.500 6-3 3 2 3 9l-3 3.500-2.500-6z" fill="#3a3038" /><path d="M8.500 8.500q1.500-3 4-2.500l1 3.500-2 2.500-3-1z" fill="#efc5b4" /><path d="M13 4l3 .5-1 2z" fill="#d9b45c" /><path d="M6.500 11l5 1.500 1.500 7q-4 1-7-1z" fill="#e6f0f3" /></svg>
        <span class="sep"></span>
        <button class="ctl" aria-label="最小化">${icon(10, 2, svg`<path class="cool" d="M0 .5h10" />`)}</button>
        <button class="ctl" aria-label="还原">${icon(12, 12, svg`<path class="cool" d="M.5 3.500h8v8h-8zM3.500 3.500v-3h8v8h-3" />`)}</button>
        <button class="ctl" aria-label="关闭">${icon(11, 11, svg`<path class="cool" d="M.5 .5l10 10M10.500 .5l-10 10" />`)}</button>
      </div>
    </div>`;
  }

  private menuBar() {
    return html`<nav class="menu">
      <button class="file">${ICONS.menu}文件${ICONS.chevron}</button>
      <span class="sep"></span>
      <div class="quick">${QUICK.map((n) => html`<button aria-label=${n}>${ICONS[n]}</button>`)}</div>
      <span class="sep"></span>
      <div class="nav"><button class="on">开始</button>${MENUS.map((m) => html`<button>${m}</button>`)}</div>
      <label class="find">${ICONS.search}<input aria-label="查找" placeholder="查找命令、搜索模板" /></label>
      <span class="grow"></span>
      <div class="acct">
        <button>${ICONS.cloud}未上云</button><button>${ICONS.people}协作</button><button>${ICONS.share}分享</button>
        <span class="sep"></span>
        <button aria-label="更多">${icon(16, 14, svg`<path class="mid" stroke-width="2" stroke-dasharray="2 3" d="M8 1v13" />`)}</button>
        <button aria-label="折叠">${icon(15, 8, svg`<path class="mid" d="M.5 7.500l7-7 7 7" />`)}</button>
      </div>
    </nav>`;
  }

  private ribbon() {
    return html`<div class="ribbon">
      <div class="group clip">${this.big("paste", "粘贴")}
        <div class="col"><button class="small">${ICONS.cut}剪切</button><button class="small">${ICONS.copy}复制${caret}</button></div>
        ${this.big("painter", "格式刷", false)}<i class="launch"></i></div>
      <div class="group font"><div class="col">
        <div class="row"><span class="pick w-face"><select aria-label="字体"><option>宋体</option></select>${caret}</span>
          <span class="pick w-size"><select aria-label="字号"><option>11</option></select>${caret}</span>${this.cell("fontUp")}${this.cell("fontDown")}</div>
        <div class="row"><button class="cellb b">B</button><button class="cellb i">I</button>${this.cell("underline")}${this.cell("strike")}
          <div class="drops">${["borders", "pattern", "fill", "fontColor", "eraser"].map((n) => this.drop(n))}</div></div>
      </div><i class="launch"></i></div>
      <div class="group align"><div class="col">
        <div class="row">${this.cell("top")}${this.cell("middle", true)}${this.cell("bottom")}${this.cell("outdent")}${this.cell("indent")}</div>
        <div class="row">${["left", "center", "right", "justify", "distribute"].map((n) => this.cell(n))}</div>
      </div>${this.big("merge", "合并居中")}${this.big("wrap", "自动换行", false)}<i class="launch"></i></div>
      <div class="group number"><div class="col">
        <div class="row"><span class="pick w-format"><select aria-label="数字格式"><option>常规</option></select>${caret}</span></div>
        <div class="row"><button class="drop yen" aria-label="货币">${ICONS.yen}${caret}</button>${["percent", "thousands", "decLess", "decMore"].map((n) => this.cell(n))}</div>
      </div>${this.big("convert", "类型转换")}<i class="launch"></i></div>
      <div class="group style">${this.big("conditional", "条件格式")}
        <div class="col"><button class="small">${ICONS.tableStyle}表格样式${caret}</button><button class="small">${ICONS.cellStyle}单元格样式${caret}</button></div></div>
      <div class="group">${this.big("sum", "求和")}${this.big("filter", "筛选")}${this.big("sort", "排序")}${this.big("fillDown", "填充")}</div>
      <div class="group">${this.big("cell", "单元格")}${this.big("rowCol", "行和列")}${this.big("sheet", "工作表")}</div>
      <div class="group">${this.big("freeze", "冻结窗格")}</div>
      <div class="group">${this.big("tableTool", "表格工具")}</div>
      <div class="group">${this.big("find", "查找")}${this.big("omega", "符号")}</div>
    </div>`;
  }

  private grid() {
    return html`<table>
      <thead><tr><th class="corner"><svg width="12" height="12"><path d="M12 0v12H0z" fill="#b9bbc0" /></svg></th>
        ${COLS.map((c, i) => html`<th scope="col" class=${i ? "" : "on"}>${c}</th>`)}</tr></thead>
      <tbody>${ROWS.map((r) => html`<tr><th scope="row" class=${r === 1 ? "on" : ""}>${r}</th>${COLS.map((_, i) =>
        r === 1 && i === 0
          ? html`<td class="act"><span class="txt">${CONTENT}</span><span class="cursor"></span></td>`
          : html`<td class=${r === 1 && i === 1 ? "under" : ""}></td>`)}</tr>`)}</tbody>
    </table>`;
  }

  private gauge() {
    const color = (i: number) => (i < 7 ? "#2c2e3a" : i < 12 ? "#e6c56a" : i < 19 ? "#a5d683" : "#63cfc0");
    return html`<svg class="gauge" width="10" height="59" viewBox="0 0 10 59" aria-hidden="true">
      <path d="M10 .5H4Q.5 .5 .5 4v51q0 3.500 3.500 3.500h6" fill="#4c4f60" stroke="#2c2e3a" />
      ${Array.from({ length: 23 }, (_, i) => svg`<rect x="4" y=${7 + i * 2} width="4" height="1" fill=${color(i)} />`)}
    </svg>`;
  }

  render() {
    return html`
      ${this.titleBar()}${this.menuBar()}${this.ribbon()}
      <div class="bar">
        <div class="name"><input aria-label="名称框" value="A1" />${caret}</div>
        <div class="tools"><button aria-label="缩小">${ICONS.zoomOut}</button><button class="fx">fx</button></div>
        <input class="formula" aria-label="编辑栏" value=${CONTENT} />
      </div>
      <div class="work">
        <div class="sheet">${this.grid()}</div>
        <div class="vbar"><i class="split"></i><div class="vtrack"><span class="up">${caret}</span><i class="vthumb"></i>${caret}</div></div>
      </div>
      <div class="sheets">
        <div class="arrows">
          ${icon(10, 12, svg`<path d="M.5 0v12M9 .5L3.500 6 9 11.500" />`)}
          ${icon(8, 12, svg`<path d="M7 .5L1.500 6 7 11.500" />`)}
          ${icon(8, 12, svg`<path d="M1 .5L6.500 6 1 11.500" />`)}
          ${icon(10, 12, svg`<path d="M9.500 0v12M1 .5L6.500 6 1 11.500" />`)}
        </div>
        <button class="sheettab">Sheet1</button>
        <button class="addsheet" aria-label="新建工作表">${icon(13, 13, svg`<path d="M0 6.500h13M6.500 0v13" />`)}</button>
        <span class="grow"></span>
        <i class="hgrip"></i>
        <div class="htrack"><span class="lt">${caret}</span><i class="hthumb"></i></div>
      </div>
      <div class="status">
        <button class="rec" aria-label="宏">${ICONS.macro}</button><span class="sep"></span><span class="grow"></span>
        <button class="sbtn on" aria-label="护眼模式">${ICONS.eye}</button>
        <button class="lead" aria-label="阅读模式">${ICONS.cross}${caret}</button><span class="sep"></span>
        <div class="views"><button class="sbtn on" aria-label="普通视图">${ICONS.normalView}</button><button class="sbtn" aria-label="页面布局">${ICONS.pageView}</button><button class="sbtn" aria-label="分页预览">${ICONS.breakView}</button></div>
        <span class="sep"></span>
        <button class="zoom">100%${caret}</button>
        <button aria-label="缩小">${icon(11, 11, svg`<path stroke-width="2" d="M0 5.500h11" />`)}</button>
        <input class="slider" type="range" aria-label="显示比例" min="0" max="100" value="50" />
        <button aria-label="放大">${icon(11, 11, svg`<path stroke-width="2" d="M0 5.500h11M5.500 0v11" />`)}</button>
        <button class="fs" aria-label="全屏">${ICONS.full}</button>
      </div>
      <format-dialog role="dialog" aria-label="单元格格式"></format-dialog>
      ${this.gauge()}
      <div class="brand" aria-hidden="true">
        <svg width="44" height="42" viewBox="0 0 44 42">
          <path d="M43 1Q12 1 3 17q-6 12 3 18Q2 22 14 13 26 4 43 1z" fill="#3d9ce0" />
          <path d="M22 13q14-2 19 6 2 16-24 21-4 1-12 1 22-7 26-16 2-9-9-12z" fill="#5cc25f" />
          <path d="M30 25q-5 8-15 7-9-3-5-11 5-8 13-6 5 3 2 8-4 5-9 3-1-4 4-5-6-1-7 5 2 6 9 4 5-1 8-5z" fill="#3a86cf" />
          <path d="M4 41q9-1 16-6l8-2q-8 7-24 8z" fill="#e8d44a" />
        </svg>
        <div><strong>极光下载站</strong><em>www.xz7.com</em></div>
      </div>`;
  }
}
